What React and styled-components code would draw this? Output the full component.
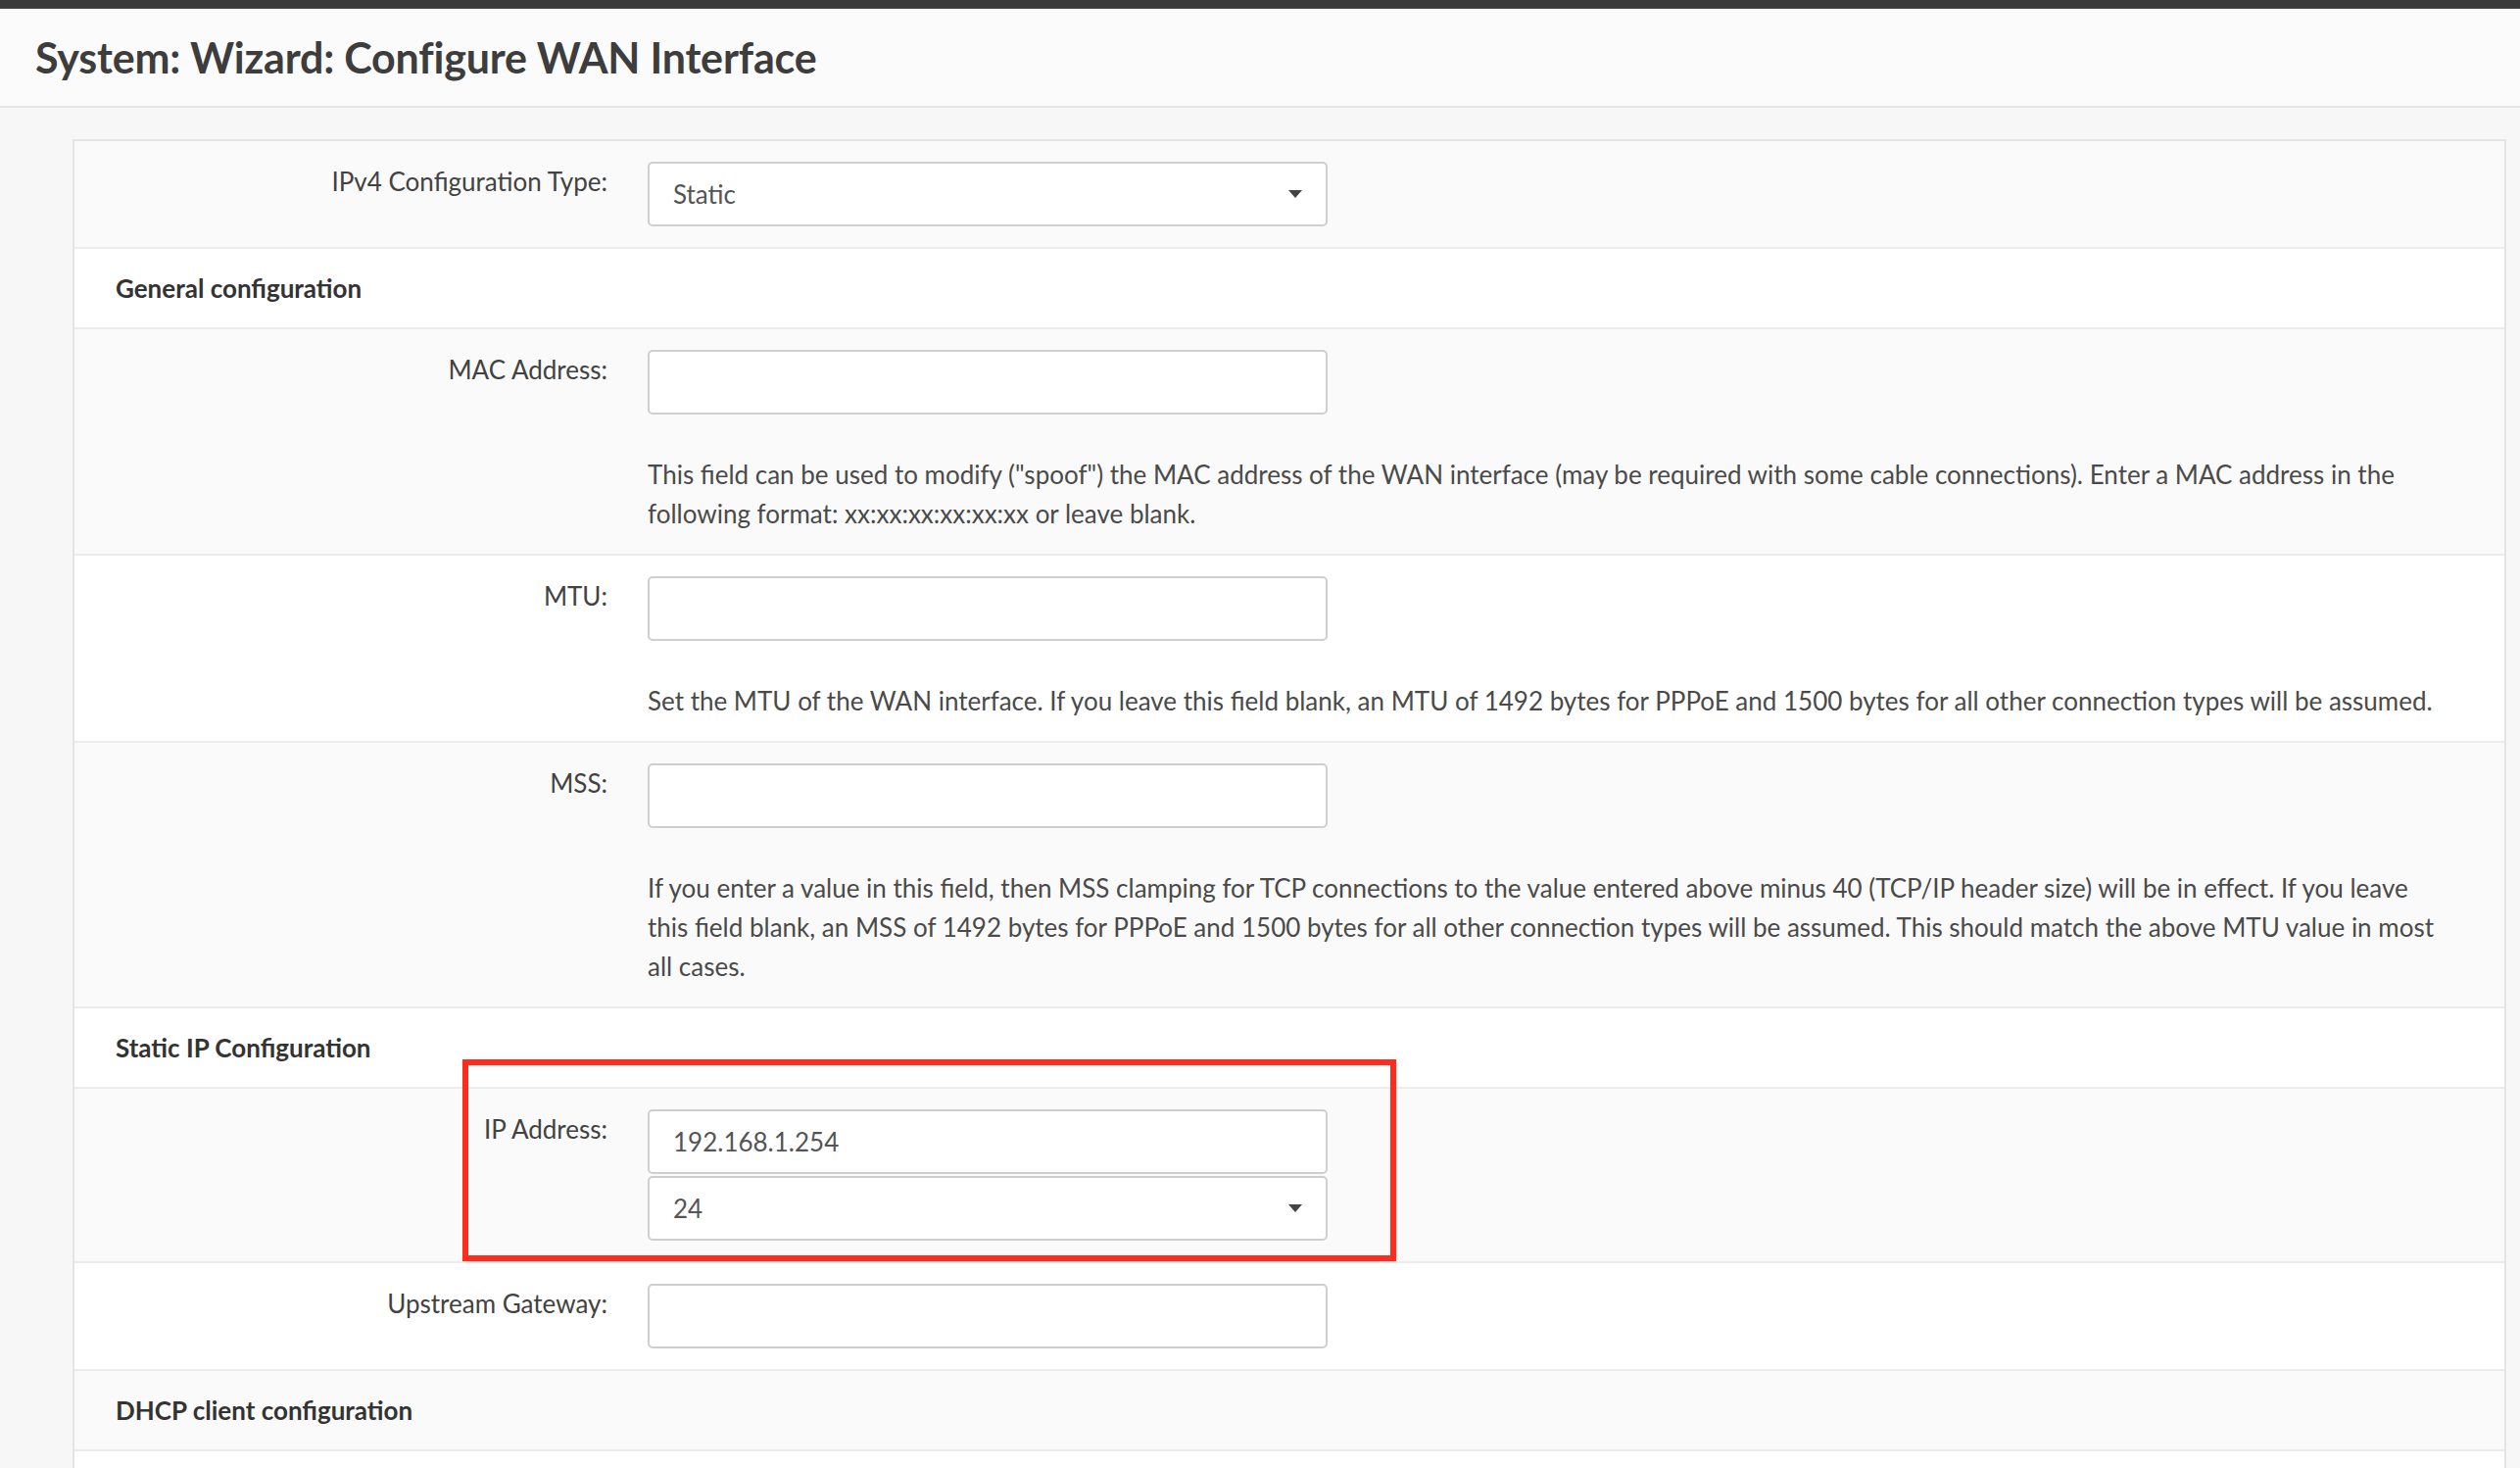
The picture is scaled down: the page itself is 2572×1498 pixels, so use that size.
import React from "react";
import styled, { createGlobalStyle } from "styled-components";

const Global = createGlobalStyle`
  html, body { margin: 0; padding: 0; }
  body {
    background: #f7f7f7;
    font-family: Lato, "Open Sans", "Liberation Sans", sans-serif;
    color: #444;
  }
  * { box-sizing: border-box; }
`;

const TopBar = styled.div`
  height: 9px;
  background: #3a3a3a;
  border-bottom: 1px solid #4a4a4a;
`;

const Header = styled.header`
  height: 101px;
  background: #fbfbfb;
  border-bottom: 2px solid #e6e6e6;
  display: flex;
  align-items: center;
  padding-left: 36px;
`;

const Title = styled.h1`
  margin: 0;
  font-size: 43px;
  font-weight: 700;
  color: #3d3d3d;
  letter-spacing: -0.2px;
`;

const Main = styled.main`
  padding: 32px 14px 0 74px;
`;

const Card = styled.section`
  position: relative;
  background: #fff;
  border: 2px solid #e4e4e4;
  border-bottom: none;
`;

const Row = styled.div`
  display: grid;
  grid-template-columns: 564px 1fr;
  background: ${(p) => (p.$striped ? "#fafafa" : "#ffffff")};
  border-top: ${(p) => (p.$first ? "none" : "2px solid #ececec")};
`;

const LabelCell = styled.div`
  padding: 21px 20px 21px 0;
  text-align: right;
  font-size: 26px;
  line-height: 40px;
  color: #424242;
`;

const ValueCell = styled.div`
  padding: 21px 54px 21px 21px;
  display: flex;
  flex-direction: column;
  gap: 2px;
`;

const SectionRow = styled.div`
  grid-column: 1 / -1;
  padding: 20px 42px;
  font-size: 26px;
  line-height: 40px;
  font-weight: 700;
  color: #333;
`;

const Field = styled.div`
  width: 694px;
  height: 66px;
  background: #fff;
  border: 2px solid #cfcfcf;
  border-radius: 5px;
  display: flex;
  align-items: center;
  justify-content: space-between;
  padding: 0 24px 0 24px;
  font-size: 26px;
  color: #555;
`;

const Caret = styled.svg`
  width: 14px;
  height: 8px;
  fill: #444;
`;

const Help = styled.div`
  margin-top: 39px;
  font-size: 26px;
  line-height: 40px;
  color: #4a4a4a;
`;

const Highlight = styled.div`
  position: absolute;
  left: 396px;
  top: 937px;
  width: 953px;
  height: 206px;
  border: 6px solid #ff2b1f;
  pointer-events: none;
`;

function Select({ value }) {
  return (
    <Field>
      <span>{value}</span>
      <Caret viewBox="0 0 14 8">
        <polygon points="0,0 14,0 7,8" />
      </Caret>
    </Field>
  );
}

function Input({ value }) {
  return <Field>{value ? <span>{value}</span> : null}</Field>;
}

function FormRow({ label, striped, first, children }) {
  return (
    <Row $striped={striped} $first={first}>
      <LabelCell>{label}</LabelCell>
      <ValueCell>{children}</ValueCell>
    </Row>
  );
}

function Section({ title, striped }) {
  return (
    <Row $striped={striped}>
      <SectionRow>{title}</SectionRow>
    </Row>
  );
}

export default function App() {
  return (
    <>
      <Global />
      <TopBar />
      <Header>
        <Title>System: Wizard: Configure WAN Interface</Title>
      </Header>
      <Main>
        <Card>
          <FormRow label="IPv4 Configuration Type:" striped first>
            <Select value="Static" />
          </FormRow>
          <Section title="General configuration" />
          <FormRow label="MAC Address:" striped>
            <Input />
            <Help>
              This field can be used to modify ("spoof") the MAC address of the WAN interface (may be
              required with some cable connections). Enter a MAC address in the following format:
              xx:xx:xx:xx:xx:xx or leave blank.
            </Help>
          </FormRow>
          <FormRow label="MTU:">
            <Input />
            <Help>
              Set the MTU of the WAN interface. If you leave this field blank, an MTU of 1492 bytes for
              PPPoE and 1500 bytes for all other connection types will be assumed.
            </Help>
          </FormRow>
          <FormRow label="MSS:" striped>
            <Input />
            <Help>
              If you enter a value in this field, then MSS clamping for TCP connections to the value
              entered above minus 40 (TCP/IP header size) will be in effect. If you leave this field
              blank, an MSS of 1492 bytes for PPPoE and 1500 bytes for all other connection types will
              be assumed. This should match the above MTU value in most all cases.
            </Help>
          </FormRow>
          <Section title="Static IP Configuration" />
          <FormRow label="IP Address:" striped>
            <Input value="192.168.1.254" />
            <Select value="24" />
          </FormRow>
          <FormRow label="Upstream Gateway:">
            <Input />
          </FormRow>
          <Section title="DHCP client configuration" striped />
          <FormRow label="">
            <Input />
          </FormRow>
          <Highlight />
        </Card>
      </Main>
    </>
  );
}
